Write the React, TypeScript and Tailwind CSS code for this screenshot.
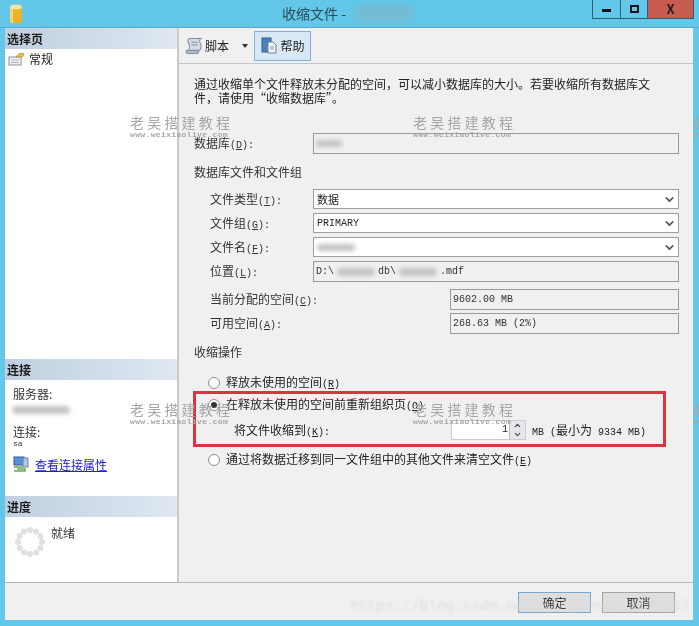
import React from 'react';
import { ChevronDown, ChevronUp } from 'lucide-react';

const cjk = "font-['Noto_Sans_CJK_SC','Liberation_Sans',sans-serif]";
const mono = "font-['Liberation_Mono','Noto_Sans_CJK_SC',monospace]";
const comma = '\uFF0C';

function SectionHeader({ label }: { label: string }) {
  return (
    <div className="h-[21px] pl-[2px] flex items-center text-[12px] font-bold text-[#1a1a1a] bg-gradient-to-r from-[#bfcfdf] to-[#dfe8f2]">
      {label}
    </div>
  );
}

function Blur({ className }: { className: string }) {
  return <span className={`inline-block rounded-sm blur-[2px] bg-[#c4c4c4] ${className}`} />;
}

// label text with the accelerator key underlined, half width like the old dialog font
function Hot({ text, letter, colon }: { text: string; letter: string; colon?: boolean }) {
  return (
    <span className="whitespace-nowrap">
      {text}
      <span className={`text-[10px] ${mono}`}>
        (<u>{letter}</u>){colon ? ':' : ''}
      </span>
    </span>
  );
}

function Combo({ children }: { children: React.ReactNode }) {
  return (
    <div className="ml-auto w-[366px] h-[20px] flex items-center pl-[3px] pr-[2px] bg-white border border-[#a0a0a0] text-[11px] text-[#222]">
      <div className="flex-1 flex items-center min-w-0">{children}</div>
      <ChevronDown size={13} strokeWidth={3} className="text-[#555]" />
    </div>
  );
}

function ReadOnly({ width, children }: { width: string; children: React.ReactNode }) {
  return (
    <div className={`ml-auto h-[21px] flex items-center pl-[2px] bg-[#f0f0f0] border border-[#9a9a9a] text-[10px] text-[#333] ${mono} ${width}`}>
      {children}
    </div>
  );
}

function Row({ text, letter, children, className }: { text: string; letter: string; children: React.ReactNode; className: string }) {
  return (
    <div className={`flex items-center pl-[16px] ${className}`}>
      <span className="text-[12px] text-[#333]"><Hot text={text} letter={letter} colon /></span>
      {children}
    </div>
  );
}

function Radio({ checked, text, letter }: { checked?: boolean; text: string; letter: string }) {
  return (
    <div className="flex items-center gap-[6px] text-[12px] text-[#222]">
      <span className="w-[12px] h-[12px] rounded-full bg-white border border-[#8f8f8f] flex items-center justify-center">
        {checked && <span className="w-[6px] h-[6px] rounded-full bg-[#333]" />}
      </span>
      <Hot text={text} letter={letter} />
    </div>
  );
}

function Watermark({ className }: { className: string }) {
  return (
    <div className={`absolute flex flex-col items-start leading-none text-[#a6a6a6] pointer-events-none ${className}`}>
      <span className="text-[14px] tracking-[3.2px] whitespace-nowrap">老吴搭建教程</span>
      <span className={`mt-[2px] text-[8px] font-bold tracking-[0.36px] whitespace-nowrap ${mono}`}>www.weixiaolive.com</span>
    </div>
  );
}

function Database() {
  return (
    <svg width="14" height="20" viewBox="0 0 14 20">
      <path d="M1 3v14c0 1.5 2.5 2.5 6 2.5s6-1 6-2.5V3z" fill="#e9b32c" />
      <path d="M1 3v14c0 1.5 1.5 2.2 3 2.4V3z" fill="#f6d873" />
      <ellipse cx="7" cy="3" rx="6" ry="2.4" fill="#f9e7a0" />
    </svg>
  );
}

function ScriptIcon() {
  return (
    <svg width="18" height="18" viewBox="0 0 17 17">
      <path d="M4 1.5h11c-1.5 1-1.5 3-.5 4.5s1 5-.5 6.5H3c1.5-2 1.5-5 .5-6.5S2.5 2.500 4 1.500z" fill="#d4dbe6" stroke="#7f8ea3" />
      <path d="M1 13h12c0 1.500-.8 2.500-2 2.500H2.500C1.500 15.500 1 14.500 1 13z" fill="#b8c3d2" stroke="#7f8ea3" />
      <path d="M6 5h6M6 7.500h6" stroke="#7f8ea3" />
    </svg>
  );
}

function HelpIcon() {
  return (
    <svg width="17" height="17" viewBox="0 0 17 17">
      <rect x="1" y="1" width="9" height="14" fill="#4d82bd" stroke="#2e5c92" />
      <path d="M7 5h5l3 3v8H7z" fill="#f4f6f9" stroke="#6f7f92" />
      <path d="M9 10h4M9 12h4" stroke="#8a98a8" />
    </svg>
  );
}

function GeneralIcon() {
  return (
    <svg width="17" height="14" viewBox="0 0 17 14">
      <rect x="1" y="5" width="12" height="8" fill="#f3f3f3" stroke="#8b94a0" />
      <path d="M3 8h8M3 10.500h8" stroke="#a8b0ba" />
      <path d="M8 5l3-3.500h5l-1.500 3.500z" fill="#e7c14d" stroke="#b08e2a" strokeWidth="0.7" />
    </svg>
  );
}

function ConnectionIcon() {
  return (
    <svg width="16" height="16" viewBox="0 0 16 16">
      <rect x="1" y="1" width="10" height="8" fill="#5a8fd6" stroke="#2f5d9e" />
      <rect x="10" y="2" width="5" height="9" fill="#b4c6de" stroke="#6c83a3" />
      <path d="M1 11h9M4 13h8v2H1" stroke="#6aa84f" strokeWidth="1.500" fill="none" />
    </svg>
  );
}

function Spinner() {
  const dots = Array.from({ length: 12 }, (_, i) => (i * Math.PI) / 6);
  return (
    <svg width="30" height="30" viewBox="0 0 30 30">
      {dots.map((a) => (
        <circle key={a} cx={15 + 12 * Math.cos(a)} cy={15 + 12 * Math.sin(a)} r="3" fill="#e0e0e0" />
      ))}
    </svg>
  );
}

export default function App() {
  return (
    <div className={`relative w-[699px] h-[626px] overflow-hidden flex flex-col bg-[#62c7e8] blur-[0.3px] ${cjk}`}>
      {/* title bar */}
      <div className="h-[28px] shrink-0 relative flex items-center justify-center border-b border-[#56a9c6]">
        <span className="absolute left-[9px] top-[4px]"><Database /></span>
        <span className="ml-[-4px] text-[14px] text-[#2f4a57] flex items-center gap-[9px]">
          收缩文件 -
          <Blur className="w-[58px] h-[17px] !bg-[#74bcd4]" />
        </span>
        <div className="absolute right-[5px] top-0 flex h-[19px] border border-t-0 border-[#2f6173]">
          <div className="w-[28px] flex items-center justify-center border-r border-[#2f6173]">
            <span className="w-[9px] h-[3px] mt-[3px] bg-[#111]" />
          </div>
          <div className="w-[27px] flex items-center justify-center border-r border-[#2f6173]">
            <span className="w-[9px] h-[8px] border-2 border-[#111]" />
          </div>
          <div className="w-[45px] flex items-center justify-center bg-[#c75b4f] text-[13px] font-bold text-[#222]">X</div>
        </div>
      </div>

      {/* client area */}
      <div className="flex-1 ml-[5px] mr-[6px] mb-[6px] flex flex-col min-h-0 bg-[#f0f0f0]">
        <div className="flex-1 flex min-h-0 border-b border-[#b5b9bd]">
          {/* left pane */}
          <div className="w-[174px] shrink-0 flex flex-col bg-white border-r-2 border-[#c9c9c9]">
            <SectionHeader label="选择页" />
            <div className="h-[17px] mt-[1px] pl-[3px] flex items-center gap-[4px] text-[12px] text-[#222]">
              <GeneralIcon />
              常规
            </div>
            <div className="h-[292px]" />
            <SectionHeader label="连接" />
            <div className="pl-[8px] pt-[6px] text-[12px] text-[#333] leading-[15px]">
              <div>服务器:</div>
              <Blur className="w-[58px] h-[8px] -ml-[1px] -mt-[1px] block" />
              <div className="mt-[8px]">连接:</div>
              <div className={`text-[8px] leading-[10px] ${mono}`}>sa</div>
              <div className="mt-[7px] flex items-center gap-[6px]">
                <ConnectionIcon />
                <span className="text-[#2222cc] underline">查看连接属性</span>
              </div>
            </div>
            <div className="flex-1" />
            <SectionHeader label="进度" />
            <div className="h-[65px] pl-[10px] pt-[10px] flex items-start gap-[6px] text-[12px] text-[#333]">
              <Spinner />
              <span className="-mt-[3px]">就绪</span>
            </div>
          </div>

          {/* right pane */}
          <div className="flex-1 flex flex-col min-w-0">
            <div className="h-[36px] shrink-0 flex items-center pl-[6px] border-b border-[#c4c4c4] text-[12px] text-[#222]">
              <ScriptIcon />
              <span className="ml-[2px]">脚本</span>
              <span className="ml-[13px] w-0 h-0 border-x-[3px] border-x-transparent border-t-[4px] border-t-[#333]" />
              <div className="ml-[6px] h-[30px] w-[57px] flex items-center justify-center gap-[3px] bg-[#d8e8f4] border border-[#7db3d6]">
                <HelpIcon />
                帮助
              </div>
            </div>

            <div className="flex-1 flex flex-col pl-[15px] pr-[14px] min-h-0">
              <p className="mt-[13px] text-[12px] leading-[14px] text-[#222] whitespace-nowrap">
                {`通过收缩单个文件释放未分配的空间${comma}可以减小数据库的大小。若要收缩所有数据库文`}
                <br />
                {`件${comma}请使用“收缩数据库”。`}
              </p>
              <Row text="数据库" letter="D" className="mt-[28px] !pl-0">
                <div className="ml-auto w-[366px] h-[21px] flex items-center pl-[2px] bg-[#f0f0f0] border border-[#9a9a9a]">
                  <Blur className="w-[26px] h-[7px]" />
                </div>
              </Row>
              <div className="mt-[10px] text-[12px] leading-[16px] text-[#333]">数据库文件和文件组</div>
              <Row text="文件类型" letter="T" className="mt-[9px]">
                <Combo>数据</Combo>
              </Row>
              <Row text="文件组" letter="G" className="mt-[4px]">
                <Combo><span className={`text-[10px] ${mono}`}>PRIMARY</span></Combo>
              </Row>
              <Row text="文件名" letter="F" className="mt-[4px]">
                <Combo><Blur className="w-[38px] h-[7px]" /></Combo>
              </Row>
              <Row text="位置" letter="L" className="mt-[4px]">
                <ReadOnly width="w-[366px]">
                  D:\<Blur className="w-[38px] h-[8px] mx-[3px]" />db\<Blur className="w-[38px] h-[8px] mx-[3px]" />.mdf
                </ReadOnly>
              </Row>
              <Row text="当前分配的空间" letter="C" className="mt-[7px]">
                <ReadOnly width="w-[229px]">9602.00 MB</ReadOnly>
              </Row>
              <Row text="可用空间" letter="A" className="mt-[3px]">
                <ReadOnly width="w-[229px]">268.63 MB (2%)</ReadOnly>
              </Row>
              <div className="mt-[10px] text-[12px] leading-[16px] text-[#333]">收缩操作</div>
              <div className="mt-[13px] pl-[14px] flex flex-col">
                <Radio text="释放未使用的空间" letter="R" />
                <div className="mt-[3px]"><Radio checked text="在释放未使用的空间前重新组织页" letter="O" /></div>
                <div className="mt-[6px] pl-[26px] flex items-center h-[20px] text-[12px] text-[#222]">
                  <Hot text="将文件收缩到" letter="K" colon />
                  <div className="ml-[121px] w-[75px] h-[20px] flex bg-white border border-[#c9ccd0]">
                    <div className={`flex-1 text-right pr-[1px] text-[10px] leading-[18px] ${mono}`}>1</div>
                    <div className="w-[16px] flex flex-col items-center justify-center bg-[#e4e8ec] border-l border-[#b8bcc0] text-[#444]">
                      <ChevronUp size={9} strokeWidth={3} />
                      <ChevronDown size={9} strokeWidth={3} />
                    </div>
                  </div>
                  <span className="ml-[6px] whitespace-nowrap">
                    <span className={`text-[10px] ${mono}`}>MB (</span>最小为<span className={`text-[10px] ${mono}`}> 9334 MB)</span>
                  </span>
                </div>
                <div className="mt-[10px]"><Radio text="通过将数据迁移到同一文件组中的其他文件来清空文件" letter="E" /></div>
              </div>
            </div>
          </div>
        </div>

        {/* footer */}
        <div className="h-[37px] shrink-0 flex items-start justify-end pt-[9px] pr-[18px] gap-[11px] text-[12px] text-[#222]">
          <button className="w-[73px] h-[21px] bg-[#dedede] border border-[#7aa7cc]">确定</button>
          <button className="w-[73px] h-[21px] bg-[#dedede] border border-[#a3a3a3]">取消</button>
        </div>
      </div>

      {/* overlays: highlight box and watermarks */}
      <div className="absolute left-[193px] top-[391px] w-[473px] h-[56px] border-[3px] border-[#dc343c] pointer-events-none" />
      <Watermark className="left-[130px] top-[115px]" />
      <Watermark className="left-[413px] top-[115px]" />
      <Watermark className="left-[693px] top-[115px]" />
      <Watermark className="left-[130px] top-[402px]" />
      <Watermark className="left-[413px] top-[402px]" />
      <Watermark className="left-[693px] top-[402px]" />
      <div className={`absolute left-[350px] top-[596px] text-[14.5px] font-bold text-[#dcdcdc]/60 blur-[0.8px] whitespace-nowrap pointer-events-none ${mono}`}>
        https://blog.csdn.net/qingsongl_yzfup87
      </div>
    </div>
  );
}
